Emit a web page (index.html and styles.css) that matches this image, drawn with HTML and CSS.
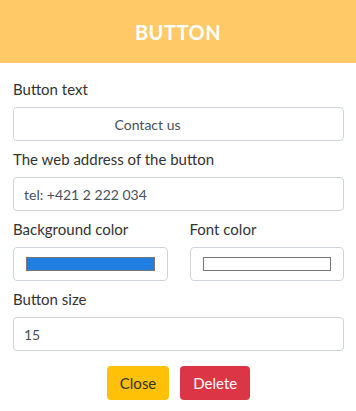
FILE: index.html
```html
<!DOCTYPE html>
<html lang="en">

<head>
    <meta charset="UTF-8">
    <meta name="viewport" content="width=device-width, initial-scale=1.0">
    <title>Button</title>
    <link rel="stylesheet" href="styles.css">
</head>

<body>
    <div class="header">
        <h1>BUTTON</h1>
    </div>
    <form class="editor">
        <div class="field">
            <label for="btn-text">Button text</label>
            <input type="text" id="btn-text" class="input centered" value="Contact us">
        </div>
        <div class="field">
            <label for="btn-url">The web address of the button</label>
            <input type="text" id="btn-url" class="input" value="tel: +421 2 222 034">
        </div>
        <div class="field colors">
            <div>
                <label>Background color</label>
                <div class="color-box"><span class="swatch blue"></span></div>
            </div>
            <div>
                <label>Font color</label>
                <div class="color-box"><span class="swatch white"></span></div>
            </div>
        </div>
        <div class="field">
            <label for="btn-size">Button size</label>
            <input type="text" id="btn-size" class="input" value="15">
        </div>
        <div class="actions">
            <button type="button" class="btn close">Close</button>
            <button type="button" class="btn delete">Delete</button>
        </div>
    </form>
</body>

</html>
```

FILE: styles.css
```css
body {
    margin: 0;
    font-family: Lato, "Open Sans", sans-serif;
    color: #333333;
    background: #ffffff;
}

.header {
    background: #ffc968;
    height: 63px;
    display: flex;
    align-items: center;
    justify-content: center;
}

.header h1 {
    margin: 0;
    color: #ffffff;
    font-size: 20px;
    font-weight: 700;
    letter-spacing: 0.5px;
}

.editor {
    padding: 18px 12px 0 13px;
}

.field {
    margin-bottom: 10px;
}

label {
    display: block;
    font-size: 15px;
    line-height: 16px;
    margin-bottom: 10px;
    color: #333333;
}

.input {
    display: block;
    width: 100%;
    height: 34px;
    box-sizing: border-box;
    border: 1px solid #ced4da;
    border-radius: 4px;
    padding: 0 10px;
    font-family: Lato, "Open Sans", sans-serif;
    font-size: 14px;
    color: #495057;
    outline: none;
}

.input.centered {
    text-align: center;
    padding-right: 72px;
}

.colors {
    display: grid;
    grid-template-columns: 1fr 1fr;
    gap: 22px;
}

.color-box {
    height: 34px;
    box-sizing: border-box;
    border: 1px solid #ced4da;
    border-radius: 4px;
    padding: 9px 12px;
}

.swatch {
    display: block;
    height: 14px;
    box-sizing: border-box;
    border: 1px solid #767676;
}

.swatch.blue {
    background: #1f7ee0;
}

.swatch.white {
    background: #ffffff;
}

.actions {
    display: flex;
    justify-content: center;
    gap: 11px;
    padding-top: 5px;
}

.btn {
    height: 34px;
    padding: 0 13px;
    border: none;
    border-radius: 4px;
    font-family: Lato, "Open Sans", sans-serif;
    font-size: 15px;
    cursor: pointer;
}

.btn.close {
    background: #ffc107;
    color: #333333;
}

.btn.delete {
    background: #dc3545;
    color: #ffffff;
}
```
